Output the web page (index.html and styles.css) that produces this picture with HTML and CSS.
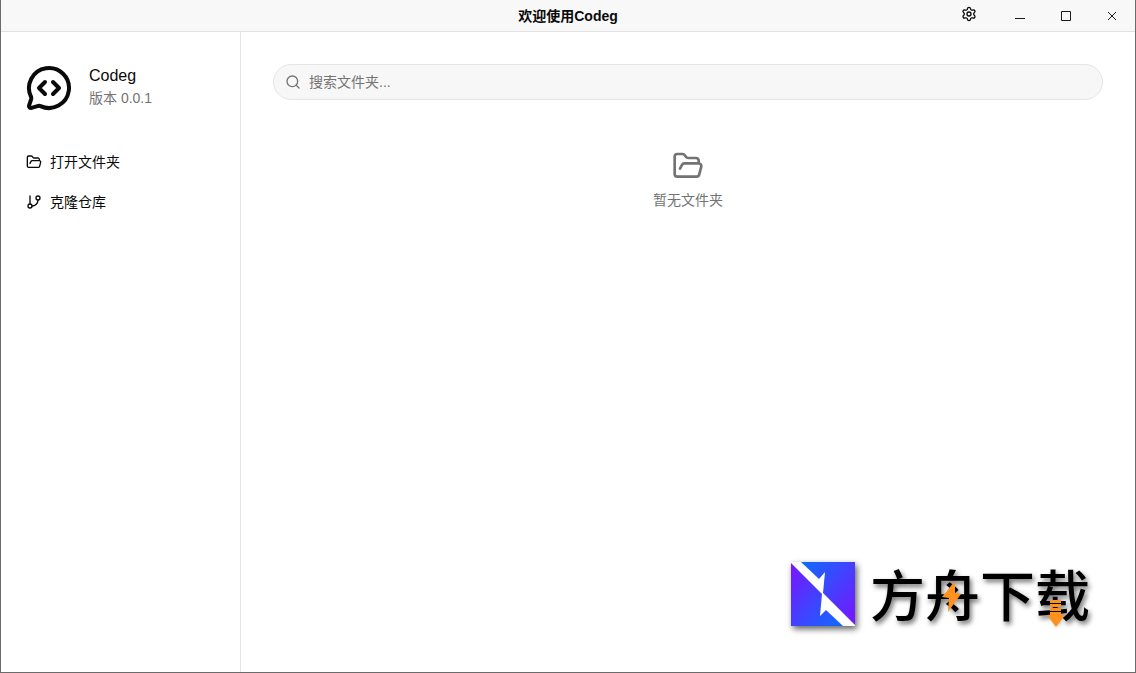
FILE: index.html
```html
<!DOCTYPE html>
<html lang="zh-CN">
<head>
<meta charset="utf-8">
<meta name="viewport" content="width=device-width, initial-scale=1">
<title>欢迎使用Codeg</title>
<link rel="stylesheet" href="styles.css">
</head>
<body>
<div class="window">
  <header class="titlebar">
    <h1 class="titlebar-title">欢迎使用Codeg</h1>
    <div class="titlebar-actions">
      <button class="settings-button" type="button" aria-label="设置">
        <svg class="icon" viewBox="0 0 24 24"><path d="M9.671 4.136a2.34 2.34 0 0 1 4.659 0 2.34 2.34 0 0 0 3.319 1.915 2.34 2.34 0 0 1 2.33 4.033 2.34 2.34 0 0 0 0 3.831 2.34 2.34 0 0 1-2.33 4.033 2.34 2.34 0 0 0-3.319 1.915 2.34 2.34 0 0 1-4.659 0 2.34 2.34 0 0 0-3.32-1.915 2.34 2.34 0 0 1-2.33-4.033 2.34 2.34 0 0 0 0-3.831A2.34 2.34 0 0 1 6.35 6.051a2.34 2.34 0 0 0 3.319-1.915"/><circle cx="12" cy="12" r="3"/></svg>
      </button>
      <button class="window-button" type="button" aria-label="最小化">
        <svg class="window-glyph" viewBox="0 0 10 10"><path d="M0 7.500h10"/></svg>
      </button>
      <button class="window-button" type="button" aria-label="最大化">
        <svg class="window-glyph" viewBox="0 0 10 10"><path d="M.5.5h9v9h-9z"/></svg>
      </button>
      <button class="window-button" type="button" aria-label="关闭">
        <svg class="window-glyph" viewBox="0 0 10 10"><path d="m1 1 8 8M9 1 1 9"/></svg>
      </button>
    </div>
  </header>
  <div class="body">
    <aside class="sidebar">
      <div class="brand">
        <svg class="brand-logo" viewBox="0 0 24 24"><path d="M2.992 16.342a2 2 0 0 1 .094 1.167l-1.065 3.29a1 1 0 0 0 1.236 1.168l3.413-.998a2 2 0 0 1 1.099.092 10 10 0 1 0-4.777-4.719"/><path d="m10 9-3 3 3 3M14 15l3-3-3-3"/></svg>
        <div class="brand-text">
          <p class="brand-name">Codeg</p>
          <p class="brand-version">版本 0.0.1</p>
        </div>
      </div>
      <nav class="actions">
        <button class="action" type="button">
          <svg class="icon" viewBox="0 0 24 24"><path d="m6 14 1.500-2.900A2 2 0 0 1 9.240 10H20a2 2 0 0 1 1.940 2.500l-1.540 6a2 2 0 0 1-1.950 1.500H4a2 2 0 0 1-2-2V5a2 2 0 0 1 2-2h3.900a2 2 0 0 1 1.690.900l.810 1.200a2 2 0 0 0 1.670.900H18a2 2 0 0 1 2 2v2"/></svg>
          <span>打开文件夹</span>
        </button>
        <button class="action" type="button">
          <svg class="icon" viewBox="0 0 24 24"><path d="M6 3v12M18 9a9 9 0 0 1-9 9"/><circle cx="18" cy="6" r="3"/><circle cx="6" cy="18" r="3"/></svg>
          <span>克隆仓库</span>
        </button>
      </nav>
    </aside>
    <main class="content">
      <label class="search">
        <svg class="icon" viewBox="0 0 24 24"><circle cx="11" cy="11" r="8"/><path d="m21 21-4.340-4.340"/></svg>
        <input class="search-input" type="text" placeholder="搜索文件夹..." aria-label="搜索文件夹">
      </label>
      <div class="empty">
        <svg class="empty-icon" viewBox="0 0 24 24"><path d="m6 14 1.500-2.900A2 2 0 0 1 9.240 10H20a2 2 0 0 1 1.940 2.500l-1.540 6a2 2 0 0 1-1.950 1.500H4a2 2 0 0 1-2-2V5a2 2 0 0 1 2-2h3.900a2 2 0 0 1 1.690.900l.810 1.200a2 2 0 0 0 1.670.900H18a2 2 0 0 1 2 2v2"/></svg>
        <p class="empty-text">暂无文件夹</p>
      </div>
    </main>
  </div>
  <div class="watermark">
    <svg class="watermark-logo" viewBox="0 0 64 64">
      <defs>
        <linearGradient id="upper" x1="0" y1="0" x2="1" y2="1"><stop offset="0" stop-color="#0d6cff"/><stop offset="1" stop-color="#7a14ff"/></linearGradient>
        <linearGradient id="lower" x1="0" y1="0" x2="1" y2="1"><stop offset="0" stop-color="#7a14ff"/><stop offset="1" stop-color="#0d6cff"/></linearGradient>
      </defs>
      <path fill="#fff" d="M0 0h64v64H0z"/>
      <path fill="url(#upper)" d="M10 0 28 17l6-7-2 21 32 32V0z"/>
      <path fill="url(#lower)" d="m0 1 31 31-2 22 6-6 17 16H0z"/>
    </svg>
    <div class="watermark-name">
      <span>方舟下载</span>
      <svg class="watermark-marks" viewBox="0 0 220 66">
        <path d="M85 19 72 35l7 1-1 14 13-18-6-1z"/>
        <path d="M180 38h11v3h-11zM180 42h11v3h-11zM180 46h11v3h-11zM180 50h11v3h4l-9 12-9-12h3z"/>
      </svg>
    </div>
  </div>
</div>
</body>
</html>
```

FILE: styles.css
```css
* {
  box-sizing: border-box;
}

body {
  margin: 0;
  color: #0a0a0a;
  font: 14px/20px "Liberation Sans", "Noto Sans CJK SC", sans-serif;
}

h1,
p {
  margin: 0;
}

button {
  padding: 0;
  border: 0;
  background: none;
  color: inherit;
  font: inherit;
}

svg {
  display: block;
  flex: none;
}

.window {
  position: relative;
  display: flex;
  flex-direction: column;
  min-height: 100vh;
  border: 1px solid #6b6b6b;
  border-top: 0;
  background: #fff;
}

.titlebar {
  display: grid;
  grid-template-columns: 1fr auto 1fr;
  align-items: center;
  height: 32px;
  border-bottom: 1px solid #e2e2e2;
  background: #f8f8f8;
}

.titlebar-title {
  grid-column: 2;
  font-size: 14px;
  font-weight: 700;
}

.titlebar-actions {
  display: flex;
  justify-content: flex-end;
}

.settings-button {
  display: grid;
  justify-items: center;
  width: 32px;
  height: 32px;
  padding-top: 6px;
  margin-right: 12px;
}

.window-button {
  display: grid;
  place-items: center;
  width: 46px;
  height: 32px;
}

.icon,
.brand-logo,
.empty-icon {
  width: 16px;
  height: 16px;
  fill: none;
  stroke: currentColor;
  stroke-width: 2;
  stroke-linecap: round;
  stroke-linejoin: round;
}

.window-glyph {
  width: 10px;
  height: 10px;
  fill: none;
  stroke: #1a1a1a;
}

.body {
  display: flex;
  flex: 1;
}

.sidebar {
  display: flex;
  flex-direction: column;
  gap: 32px;
  flex: none;
  width: 240px;
  padding: 32px 16px;
  border-right: 1px solid #e5e5e5;
}

.brand {
  display: flex;
  align-items: flex-start;
  gap: 16px;
  padding: 0 8px;
}

.brand-logo {
  width: 48px;
  height: 48px;
}

.brand-name {
  font-size: 16px;
  line-height: 24px;
}

.brand-version {
  color: #737373;
}

.actions {
  display: flex;
  flex-direction: column;
  gap: 4px;
}

.action {
  display: flex;
  align-items: center;
  gap: 8px;
  height: 36px;
  padding: 0 9px;
}

.content {
  display: flex;
  flex-direction: column;
  flex: 1;
  gap: 50px;
  padding: 32px;
}

.search {
  display: flex;
  align-items: center;
  gap: 8px;
  height: 36px;
  padding: 0 11px;
  border: 1px solid #e5e5e5;
  border-radius: 18px;
  background: #f7f7f7;
  color: #737373;
}

.search-input {
  flex: 1;
  min-width: 0;
  padding: 0;
  border: 0;
  outline: 0;
  background: none;
  color: #0a0a0a;
  font: inherit;
}

.search-input::placeholder {
  color: #737373;
  opacity: 1;
}

.empty {
  display: flex;
  flex-direction: column;
  align-items: center;
  gap: 8px;
  color: #737373;
}

.empty-icon {
  width: 32px;
  height: 32px;
}

.watermark {
  position: absolute;
  right: 45px;
  bottom: 46px;
  display: flex;
  align-items: flex-start;
  gap: 15px;
}

.watermark-logo {
  width: 64px;
  height: 64px;
  filter: drop-shadow(2px 3px 3px #000000a0);
}

.watermark-name {
  position: relative;
  width: 220px;
  color: #000;
  font: 500 55px/60px "Noto Sans CJK SC", sans-serif;
  white-space: nowrap;
  text-shadow: 2px 3px 5px #00000090;
}

.watermark-marks {
  position: absolute;
  top: 0;
  left: 0;
  width: 220px;
  height: 66px;
  fill: #ff921e;
}
```
